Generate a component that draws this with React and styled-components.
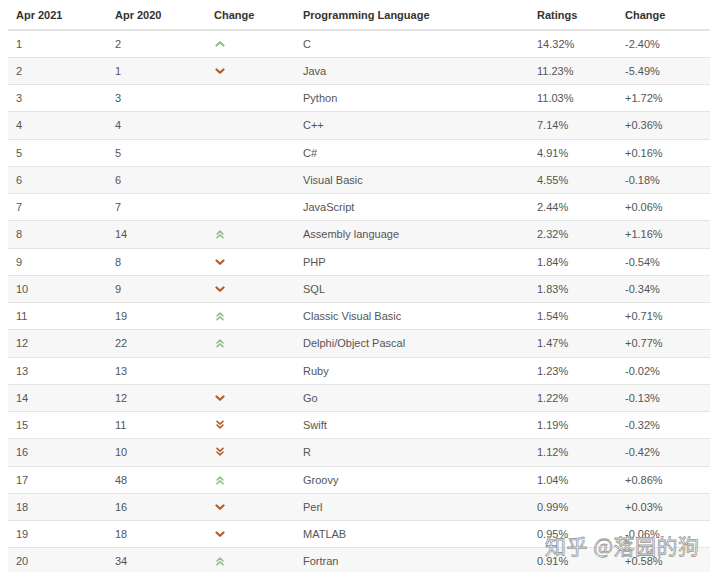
import styled, { createGlobalStyle } from "styled-components";

const GlobalStyle = createGlobalStyle`
  html, body {
    margin: 0;
    padding: 0;
    background: #ffffff;
  }
  body {
    font-family: "Liberation Sans", Arial, sans-serif;
  }
`;

const Page = styled.div`
  position: relative;
  width: 720px;
  height: 572px;
  overflow: hidden;
  padding: 0 10px 0 8px;
  box-sizing: border-box;
`;

const Table = styled.table`
  width: 702px;
  border-collapse: collapse;
  table-layout: fixed;
  font-size: 11px;
`;

const HeadCell = styled.th`
  box-sizing: border-box;
  width: ${(p) => p.$w}px;
  height: 30px;
  padding: 0 8px;
  text-align: left;
  font-weight: bold;
  color: #333;
  border-bottom: 2px solid #e2e2e2;
`;

const Row = styled.tr`
  background: ${(p) => (p.$odd ? "#ffffff" : "#f7f7f7")};
`;

const Cell = styled.td`
  box-sizing: border-box;
  height: 27.26px;
  padding: 0 8px;
  color: #555;
  border-bottom: 1px solid #e4e4e4;
  white-space: nowrap;
`;

const Arrow = styled.svg`
  display: block;
  margin-left: 1px;
  color: ${(p) => (p.$up ? "#8fc088" : "#b95a2c")};
`;

const Watermark = styled.div`
  position: absolute;
  left: 545px;
  top: 530px;
  font-family: "Noto Sans CJK SC", sans-serif;
  font-size: 21px;
  letter-spacing: 0.5px;
  color: rgba(255, 255, 255, 0.85);
  -webkit-text-stroke: 0.8px #9a9a9a;
  pointer-events: none;
`;

const cols = [
  ["Apr 2021", 99],
  ["Apr 2020", 99],
  ["Change", 89],
  ["Programming Language", 234],
  ["Ratings", 88],
  ["Change", 93],
];

const data = [
  [1, 2, "up", "C", "14.32%", "-2.40%"],
  [2, 1, "down", "Java", "11.23%", "-5.49%"],
  [3, 3, "", "Python", "11.03%", "+1.72%"],
  [4, 4, "", "C++", "7.14%", "+0.36%"],
  [5, 5, "", "C#", "4.91%", "+0.16%"],
  [6, 6, "", "Visual Basic", "4.55%", "-0.18%"],
  [7, 7, "", "JavaScript", "2.44%", "+0.06%"],
  [8, 14, "up2", "Assembly language", "2.32%", "+1.16%"],
  [9, 8, "down", "PHP", "1.84%", "-0.54%"],
  [10, 9, "down", "SQL", "1.83%", "-0.34%"],
  [11, 19, "up2", "Classic Visual Basic", "1.54%", "+0.71%"],
  [12, 22, "up2", "Delphi/Object Pascal", "1.47%", "+0.77%"],
  [13, 13, "", "Ruby", "1.23%", "-0.02%"],
  [14, 12, "down", "Go", "1.22%", "-0.13%"],
  [15, 11, "down2", "Swift", "1.19%", "-0.32%"],
  [16, 10, "down2", "R", "1.12%", "-0.42%"],
  [17, 48, "up2", "Groovy", "1.04%", "+0.86%"],
  [18, 16, "down", "Perl", "0.99%", "+0.03%"],
  [19, 18, "down", "MATLAB", "0.95%", "-0.06%"],
  [20, 34, "up2", "Fortran", "0.91%", "+0.58%"],
];

// chevron polylines, drawn in a 10x10 box
const shapes = {
  up: ["1.5,6.5 5,3.2 8.5,6.5"],
  down: ["1.5,3.5 5,6.8 8.5,3.5"],
  up2: ["2,5 5,2.2 8,5", "2,8.6 5,5.8 8,8.6"],
  down2: ["2,1.4 5,4.2 8,1.4", "2,5 5,7.8 8,5"],
};

function ChangeIcon({ kind }) {
  if (!shapes[kind]) return null;
  const double = kind.endsWith("2");
  return (
    <Arrow $up={kind.startsWith("up")} width="10" height="10" viewBox="0 0 10 10">
      {shapes[kind].map((pts, i) => (
        <polyline
          key={i}
          points={pts}
          fill="none"
          stroke="currentColor"
          strokeWidth={double ? 1.6 : 2.2}
          strokeLinecap="round"
          strokeLinejoin="round"
        />
      ))}
    </Arrow>
  );
}

export default function App() {
  return (
    <Page>
      <GlobalStyle />
      <Table>
        <thead>
          <tr>
            {cols.map(([label, w], i) => (
              <HeadCell key={i} $w={w}>
                {label}
              </HeadCell>
            ))}
          </tr>
        </thead>
        <tbody>
          {data.map((r, i) => (
            <Row key={i} $odd={i % 2 === 0}>
              <Cell>{r[0]}</Cell>
              <Cell>{r[1]}</Cell>
              <Cell>
                <ChangeIcon kind={r[2]} />
              </Cell>
              <Cell>{r[3]}</Cell>
              <Cell>{r[4]}</Cell>
              <Cell>{r[5]}</Cell>
            </Row>
          ))}
        </tbody>
      </Table>
      <Watermark>知乎 @落园的狗</Watermark>
    </Page>
  );
}
